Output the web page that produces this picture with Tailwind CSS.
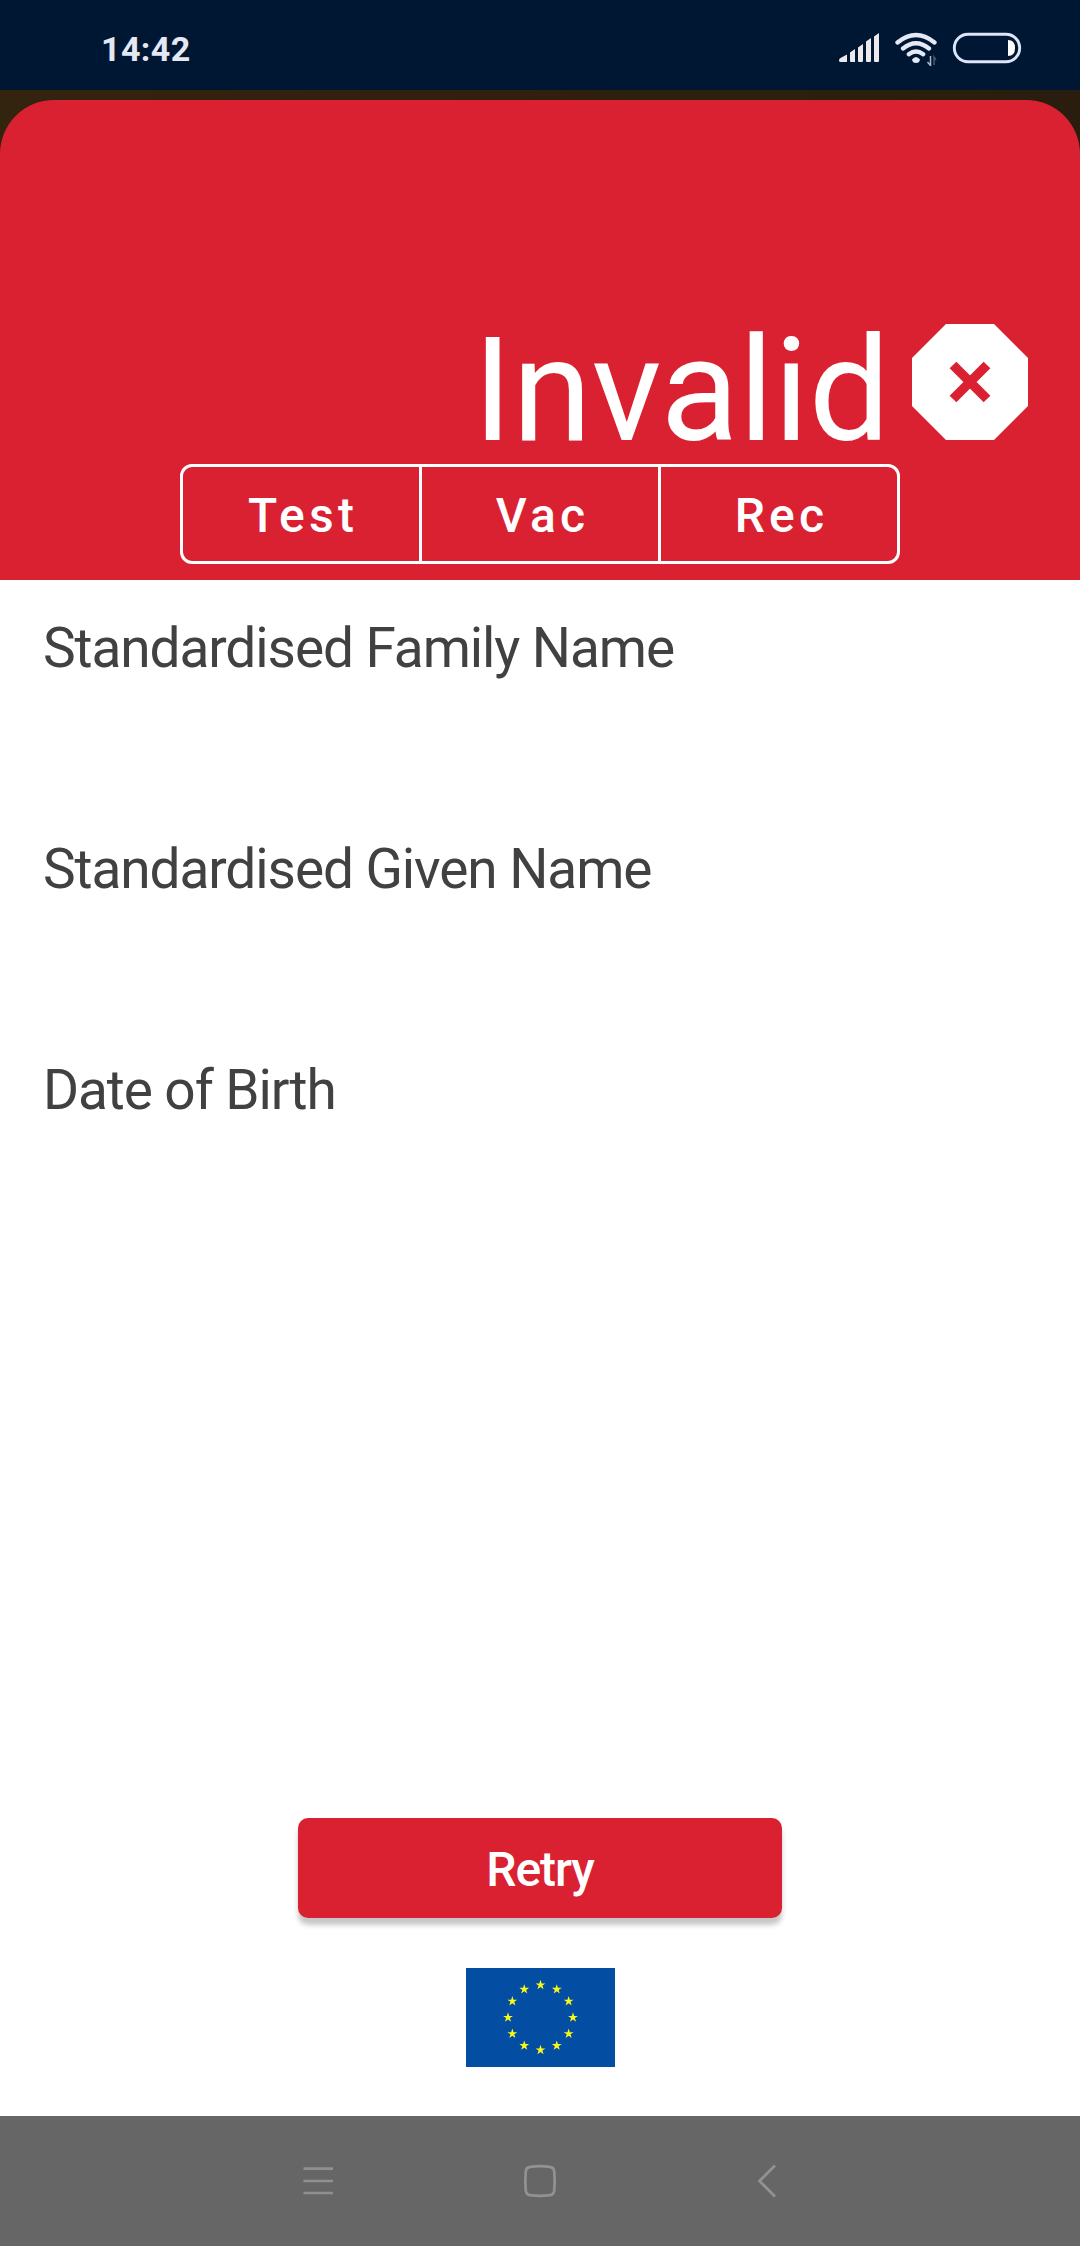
<!DOCTYPE html>
<html lang="en">
<head>
<meta charset="utf-8">
<title>Certificate result</title>
<script src="https://cdn.jsdelivr.net/npm/@tailwindcss/browser@4"></script>
</head>
<body class="flex h-[2246px] w-[1080px] flex-col overflow-hidden bg-white font-['Roboto',sans-serif]">
<header class="flex h-[90px] shrink-0 items-center justify-between bg-[#001733] pr-[58px] pl-[101px] text-[#e4e8f2]">
  <span class="pt-[7px] text-[34px] leading-10 font-bold tracking-[0.400px]">14:42</span>
  <svg class="mt-[6px] h-9 w-[184px]" viewBox="838 30 184 36" fill="none">
    <path fill="#ebe9ec" d="M839 60q0-1 1.500-2l6.500-3.500v7.500h-7q-1 0-1-2zM850 52.500l5-3.500v13h-4q-1 0-1-1zM858 47.500l5-3.500v17q0 1-1 1h-3q-1 0-1-1zM866 41.500l5-3.500v23q0 1-1 1h-3q-1 0-1-1zM874 36.500l5-3.500v28q0 1-1 1h-3q-1 0-1-1z"/>
    <g stroke="#e4e9f5" stroke-width="4.300" stroke-linecap="round"><path d="M897.500 42.500q18.500-15 37 0M903 48.500q13-10.500 26 0M908.800 54.200q7.200-5.500 14.400 0"/></g>
    <path fill="#e4e9f5" d="M912 59.500q4-5 8 0q-.5 3.500-4 3.500t-4-3.500z"/>
    <path stroke="#aeb6c8" stroke-width="1.500" d="M930.500 56v9.500l-3-3.500"/><path stroke="#4b566e" stroke-width="1.500" d="M934 65v-8l2 3"/>
    <rect x="954.300" y="34.300" width="65.400" height="27.400" rx="13.700" stroke="#dde5f8" stroke-width="2.900"/>
    <path fill="#fff" d="M1008 40q7 0 7 8t-7 8z"/>
  </svg>
</header>
<main class="flex h-[2026px] shrink-0 flex-col bg-white">
  <div class="shrink-0 bg-gradient-to-r from-[#33240f] to-[#2b1d0d] pt-[10px]">
    <section class="flex h-[480px] flex-col items-center rounded-t-[54px] bg-[#da2131] text-white">
      <div class="flex w-full items-start justify-end pt-[196px] pr-[52px]">
        <h1 class="mt-[22px] mr-[22px] text-[144px] leading-[146px] font-normal">Invalid</h1>
        <svg class="mt-[28px] size-[116px]" viewBox="0 0 116 116"><path fill="#fff" d="M34 0h48l34 34v48l-34 34H34L0 82V34z"/><path stroke="#da2131" stroke-width="9.500" d="M41 41l34 34M75 41l-34 34"/></svg>
      </div>
      <div class="grid h-[100px] w-[720px] grid-cols-[239px_239px_1fr] divide-x-3 divide-white rounded-[12px] border-3 border-white text-[48px] leading-[56px] font-medium tracking-[4.200px]">
        <div class="flex items-center justify-center pt-1 pl-1">Test</div>
        <div class="flex items-center justify-center pt-1 pl-[5px]">Vac</div>
        <div class="flex items-center justify-center pt-1 pl-[5px]">Rec</div>
      </div>
    </section>
  </div>
  <dl class="flex flex-col gap-[157px] pt-[36px] pl-[43px] text-[55px] leading-[64px] tracking-[-1.090px] text-[#414141]">
    <dt>Standardised Family Name</dt>
    <dt>Standardised Given Name</dt>
    <dt>Date of Birth</dt>
  </dl>
  <div class="mt-auto flex flex-col items-center pb-[49px]">
    <button class="h-[100px] w-[484px] rounded-[10px] bg-[#da2131] pt-1 text-[48px] leading-[56px] font-medium tracking-[-1.100px] text-white shadow-[0_7px_5px_rgba(0,0,0,0.22)]">Retry</button>
    <svg class="mt-[50px] h-[99px] w-[149px]" viewBox="-74.500 -49.500 149 99">
      <defs><path id="star" fill="#f8f81c" d="M0-5.200L1.200-1.600H4.950L1.900.62L3.050 4.200L0 2L-3.050 4.200L-1.900.62L-4.950-1.600H-1.200Z"/></defs>
      <path fill="#034ea2" d="M-74.500-49.500h149v99h-149z"/>
      <use href="#star" x="0" y="-32.500"/><use href="#star" x="16.250" y="-28.150"/><use href="#star" x="28.150" y="-16.250"/><use href="#star" x="32.500" y="0"/><use href="#star" x="28.150" y="16.250"/><use href="#star" x="16.250" y="28.150"/><use href="#star" x="0" y="32.500"/><use href="#star" x="-16.250" y="28.150"/><use href="#star" x="-28.150" y="16.250"/><use href="#star" x="-32.500" y="0"/><use href="#star" x="-28.150" y="-16.250"/><use href="#star" x="-16.250" y="-28.150"/>
    </svg>
  </div>
</main>
<nav class="flex h-[130px] shrink-0 items-center justify-between bg-[#666] pr-[303px] pl-[303px]">
  <svg class="h-9 w-8" viewBox="0 0 32 36" stroke="#909090" stroke-width="2.700"><path d="M.5 5.700h29.500M.5 18h29.500M.5 30h29.500"/></svg>
  <svg class="mr-[13px] size-9" viewBox="0 0 36 36" fill="none" stroke="#929292" stroke-width="2.700"><path d="M8 3.800Q18 2.400 28 3.800Q31.500 4.200 32.200 8Q33.200 18 32.200 28Q31.500 31.800 28 32.200Q18 33.600 8 32.200Q4.500 31.800 3.800 28Q2.800 18 3.800 8Q4.500 4.200 8 3.800Z"/></svg>
  <svg class="h-9 w-5" viewBox="0 0 20 36" fill="none" stroke="#929292" stroke-width="2.700"><path d="M18 2.500L2.500 18l15.500 15.500"/></svg>
</nav>
</body>
</html>
